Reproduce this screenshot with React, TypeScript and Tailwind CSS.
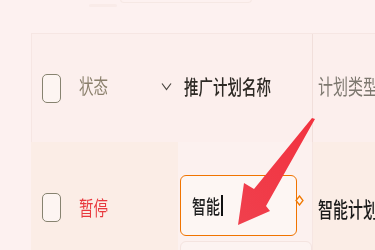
import React from "react";

const font = { fontFamily: '"Noto Sans CJK SC", "Noto Sans", sans-serif' };

function Box() {
  return (
    <div className="w-[19px] h-[29px] rounded-[5px] border-[1.8px] border-[#878370] bg-[#fdf5f2] shrink-0" />
  );
}

function T({ children, cls }: { children: React.ReactNode; cls: string }) {
  return (
    <span className={`inline-block scale-y-[1.4] leading-none whitespace-nowrap ${cls}`}>{children}</span>
  );
}

export default function App() {
  return (
    <div
      className="relative w-[375px] h-[250px] overflow-hidden bg-[#fdf1f0] blur-[0.3px]"
      style={font}
    >
      {/* faint top remnants */}
      <div className="h-[33px] flex items-start">
        <div className="ml-[89px] mt-[4px] w-[28px] h-[3px] bg-[#f9ebe8] rounded-sm" />
        <div className="ml-[3px] -mt-[6px] w-[132px] h-[9px] rounded-b-[4px] border border-t-0 border-[#f6e8e4]" />
      </div>

      <div className="ml-[31px] flex flex-col">
        {/* header */}
        <div className="flex h-[109px] bg-[#fcefed] border-t border-l border-[#f6e6e3]">
          <div className="w-[146px] shrink-0 flex items-center">
            <div className="ml-[10px]">
              <Box />
            </div>
            <div className="ml-[18px] -mt-[7px]">
              <T cls="text-[14.5px] text-[#8b806c]">状态</T>
            </div>
            <svg className="ml-auto mr-[6px] -mt-[3px]" width="11" height="9" viewBox="0 0 11 9">
              <polyline points="1,1.5 5.5,7.5 10,1.5" fill="none" stroke="#4a4640" strokeWidth="1.2" />
            </svg>
          </div>
          <div className="w-[135px] shrink-0 flex items-center pl-[6px] border-r border-[#f1dfdb]">
            <div className="-mt-[4px]">
              <T cls="text-[14.5px] font-medium text-[#2e2a25]">推广计划名称</T>
            </div>
          </div>
          <div className="flex-1 min-w-0 overflow-hidden flex items-center pl-[5px]">
            <div className="-mt-[9px]">
              <T cls="text-[15px] text-[#7d786f]">计划类型</T>
            </div>
          </div>
        </div>

        {/* body row */}
        <div className="flex h-[130px] bg-[#fbede6]">
          <div className="w-[147px] shrink-0 flex items-center">
            <div className="ml-[11px]">
              <Box />
            </div>
            <div className="ml-[18px]">
              <T cls="text-[14.5px] text-[#e8383d]">暂停</T>
            </div>
          </div>
          <div className="w-[135px] shrink-0 bg-[#fcf1ef] pt-[33px] pl-[2px] border-r border-[#f6e6e2]">
            <div className="relative w-[117px] h-[61px] rounded-[6px] border-[1.8px] border-[#f07400] bg-[#fdf6f3] flex items-center pl-[11px]">
              <T cls="text-[14px] font-medium text-[#1c1c1c]">智能</T>
              <div className="ml-[1px] w-[1.5px] h-[21px] bg-[#111]" />
              <svg className="absolute -right-[8px] top-[19px]" width="9" height="11" viewBox="0 0 9 11">
                <polygon points="4.5,1 8,5.5 4.5,10 1,5.5" fill="#fdf6f3" stroke="#f07800" strokeWidth="1.3" />
              </svg>
            </div>
            <div className="mt-[5px] w-[132px] h-[40px] rounded-[6px] border border-[#f4e4e0] bg-[#fcf3f1]" />
          </div>
          <div className="flex-1 min-w-0 overflow-hidden flex items-center pl-[5px]">
            <T cls="text-[15px] font-medium text-[#1a1a1a]">智能计划</T>
          </div>
        </div>
      </div>

      {/* red arrow annotation */}
      <svg className="absolute left-0 top-0 pointer-events-none" width="375" height="250" viewBox="0 0 375 250">
        <defs>
          <linearGradient id="ag" x1="1" y1="0" x2="0" y2="1">
            <stop offset="0" stopColor="#f2323f" />
            <stop offset="1" stopColor="#f0404d" />
          </linearGradient>
        </defs>
        <polygon
          points="315,119 266,206 270,211 238,225 244,183 254,189 312,118"
          fill="url(#ag)"
        />
      </svg>
    </div>
  );
}
